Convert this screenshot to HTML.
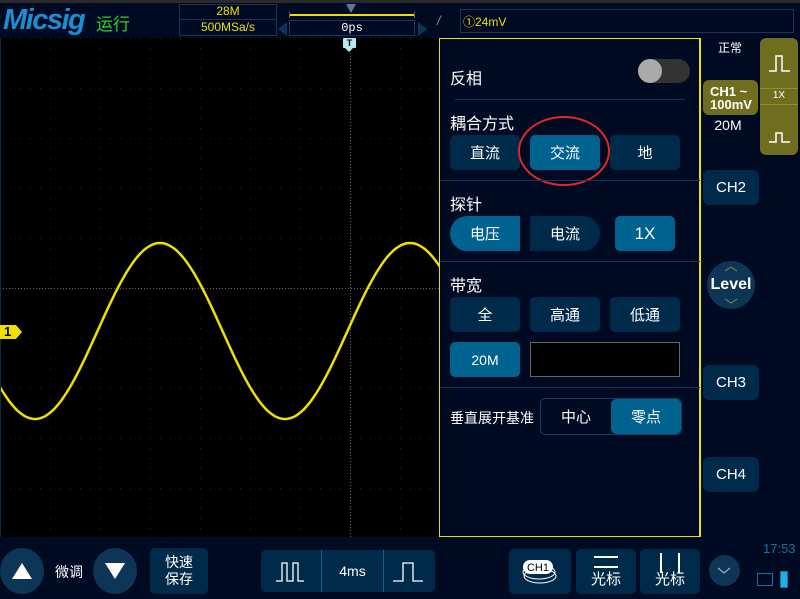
<!DOCTYPE html>
<html><head><meta charset="utf-8"><style>
*{margin:0;padding:0;box-sizing:border-box}
body{width:800px;height:599px;background:#000a22;position:relative;overflow:hidden;font-family:"Liberation Sans","Noto Sans CJK SC",sans-serif;color:#fff}
.a{position:absolute}
.btn{position:absolute;background:#002a4a;border-radius:5px;color:#fff;display:flex;align-items:center;justify-content:center;font-size:15px}
.sel{background:#00628e}
.hl{position:absolute;height:1px;background:#1e2f55;left:446px;width:250px}
.lbl{position:absolute;font-size:16px;color:#fff}
</style></head><body>
<div class="a" style="left:0;top:0;width:800px;height:3px;background:#2a2a2a"></div>
<div class="a" style="left:3px;top:4px;font-size:29px;font-weight:bold;font-style:italic;color:#1a8fd0;letter-spacing:-1.5px">Micsig</div>
<div class="a" style="left:96px;top:10px;font-size:17px;color:#2fd02f">运行</div>
<div class="a" style="left:179px;top:4px;width:98px;height:32px;border:1px solid #1d3358"></div>
<div class="a" style="left:179px;top:19px;width:98px;height:1px;background:#1d3358"></div>
<div class="a" style="left:179px;top:4px;width:98px;text-align:center;font-size:12px;color:#f0e000">28M</div>
<div class="a" style="left:179px;top:20px;width:98px;text-align:center;font-size:12px;color:#f0e000">500MSa/s</div>
<div class="a" style="left:289px;top:12px;width:126px;height:6px;border:1px solid #666;border-top:none;border-bottom:none"></div>
<div class="a" style="left:290px;top:14px;width:124px;height:2px;background:#f0e000"></div>
<div class="a" style="left:346px;top:4px;width:0;height:0;border-left:5px solid transparent;border-right:5px solid transparent;border-top:9px solid #5a7a9a"></div>
<div class="a" style="left:278px;top:22px;border-top:7px solid transparent;border-bottom:7px solid transparent;border-right:9px solid #0d3555"></div>
<div class="a" style="left:418px;top:22px;border-top:7px solid transparent;border-bottom:7px solid transparent;border-left:9px solid #0d3555"></div>
<div class="a" style="left:289px;top:20px;width:126px;height:16px;border:1px solid #1d3358;text-align:center;font-size:12px;line-height:15px;font-family:'Liberation Mono',monospace">0ps</div>
<div class="a" style="left:437px;top:13px;font-size:13px;color:#888;font-style:italic">/</div>
<div class="a" style="left:460px;top:9px;width:334px;height:24px;border:1px solid #1d3358;font-size:12px;color:#f0e000;padding:3px 2px">①24mV</div>

<svg class="a" style="left:0;top:38px" width="700" height="499" id="g">
<rect width="700" height="499" fill="#000"/>
</svg>
<div class="a" style="left:0;top:38px;width:1px;height:499px;background:#0c2a48"></div>
<div class="a" style="left:343px;top:38px;width:13px;height:10px;background:#b8e8f0;border-radius:1px;color:#000;font-size:9px;text-align:center;line-height:10px;font-weight:bold">T</div>
<div class="a" style="left:345px;top:48px;border-left:4px solid transparent;border-right:4px solid transparent;border-top:4px solid #b8e8f0"></div>
<div class="a" style="left:0;top:325px;width:16px;height:14px;background:#f0e000;color:#000;font-weight:bold;font-size:13px;line-height:14px;padding-left:4px">1</div>
<div class="a" style="left:16px;top:325px;border-top:7px solid transparent;border-bottom:7px solid transparent;border-left:6px solid #f0e000"></div>

<div class="a" style="left:439px;top:38px;width:262px;height:499px;background:#000a22;border:1px solid #f0e000;border-right:2px solid #f0e000"></div>
<div class="lbl" style="left:450px;top:65px">反相</div>
<div class="a" style="left:638px;top:59px;width:52px;height:24px;border-radius:12px;background:#333"></div>
<div class="a" style="left:638px;top:59px;width:24px;height:24px;border-radius:12px;background:#aaa"></div>
<div class="hl" style="top:99px;left:455px;width:230px"></div>
<div class="lbl" style="left:450px;top:110px">耦合方式</div>
<div class="btn" style="left:450px;top:135px;width:70px;height:35px">直流</div>
<div class="btn sel" style="left:530px;top:135px;width:70px;height:35px">交流</div>
<div class="btn" style="left:610px;top:135px;width:70px;height:35px">地</div>
<div class="a" style="left:518px;top:116px;width:92px;height:70px;border:2px solid #e02828;border-radius:50%"></div>
<div class="hl" style="top:180px;left:440px;width:260px"></div>
<div class="lbl" style="left:450px;top:191px">探针</div>
<div class="btn sel" style="left:450px;top:216px;width:70px;height:35px;border-radius:17px 0 0 17px">电压</div>
<div class="btn" style="left:530px;top:216px;width:70px;height:35px;border-radius:0 17px 17px 0">电流</div>
<div class="btn sel" style="left:615px;top:216px;width:60px;height:35px;font-size:17px">1X</div>
<div class="hl" style="top:261px;left:440px;width:260px"></div>
<div class="lbl" style="left:450px;top:272px">带宽</div>
<div class="btn" style="left:450px;top:297px;width:70px;height:35px">全</div>
<div class="btn" style="left:530px;top:297px;width:70px;height:35px">高通</div>
<div class="btn" style="left:610px;top:297px;width:70px;height:35px">低通</div>
<div class="btn sel" style="left:450px;top:342px;width:70px;height:35px;font-size:14px">20M</div>
<div class="a" style="left:530px;top:342px;width:150px;height:35px;background:#000;border:1px solid #666"></div>
<div class="hl" style="top:387px;left:440px;width:260px"></div>
<div class="lbl" style="left:450px;top:408px;font-size:14px">垂直展开基准</div>
<div class="a" style="left:540px;top:398px;width:142px;height:37px;border:1px solid #1d3a5a;border-radius:5px"></div>
<div class="btn" style="left:541px;top:399px;width:70px;height:35px;background:none;font-size:15px">中心</div>
<div class="btn sel" style="left:611px;top:399px;width:70px;height:35px">零点</div>

<div class="a" style="left:718px;top:39px;font-size:12px">正常</div>
<div class="a" style="left:760px;top:38px;width:38px;height:117px;background:#6e6e1e;border-radius:6px"></div>
<div class="a" style="left:760px;top:88px;width:38px;height:1px;background:#8e8e3e"></div>
<div class="a" style="left:760px;top:104px;width:38px;height:1px;background:#8e8e3e"></div>
<div class="a" style="left:760px;top:90px;width:38px;text-align:center;font-size:10px">1X</div>
<svg class="a" style="left:760px;top:38px" width="38" height="117"><path d="M9 33h7v-15h6v15h8M9 104h7v-9h6v9h8" stroke="#fff" stroke-width="1.5" fill="none"/></svg>
<div class="a" style="left:703px;top:80px;width:55px;height:35px;background:#6e6e1e;border-radius:6px;font-size:13px;font-weight:bold;line-height:13px;padding:5px 0 0 7px">CH1 ~<br>100mV</div>
<div class="a" style="left:697px;top:117px;width:62px;text-align:center;font-size:14px">20M</div>
<div class="btn" style="left:703px;top:170px;width:56px;height:35px;border-radius:6px">CH2</div>
<div class="a" style="left:707px;top:261px;width:48px;height:48px;border-radius:50%;background:#0d3555;font-size:16px;font-weight:bold;text-align:center;line-height:48px">Level</div>
<svg class="a" style="left:707px;top:261px" width="48" height="48"><path d="M18 10l6-4 6 4M18 38l6 4 6-4" stroke="#8a8a3a" fill="none"/></svg>
<div class="btn" style="left:703px;top:365px;width:56px;height:35px;border-radius:6px">CH3</div>
<div class="btn" style="left:703px;top:457px;width:56px;height:35px;border-radius:6px">CH4</div>

<div class="a" style="left:0;top:548px;width:44px;height:46px;border-radius:50%;background:#0d3555"></div>
<svg class="a" style="left:11px;top:562px" width="22" height="18"><path d="M11 1L21 17H1z" fill="#fff"/></svg>
<div class="a" style="left:55px;top:562px;font-size:14px">微调</div>
<div class="a" style="left:93px;top:548px;width:44px;height:46px;border-radius:50%;background:#0d3555"></div>
<svg class="a" style="left:104px;top:562px" width="22" height="18"><path d="M1 1H21L11 17z" fill="#fff"/></svg>
<div class="btn" style="left:150px;top:548px;width:58px;height:46px;font-size:14px;line-height:17px;text-align:center">快速<br>保存</div>
<div class="btn" style="left:261px;top:550px;width:174px;height:42px"></div>
<div class="a" style="left:321px;top:550px;width:1px;height:42px;background:#0d6090"></div>
<div class="a" style="left:383px;top:550px;width:1px;height:42px;background:#0d6090"></div>
<div class="a" style="left:322px;top:563px;width:61px;text-align:center;font-size:14px">4ms</div>
<svg class="a" style="left:261px;top:550px" width="174" height="42"><path d="M15 31h6v-18h5v18h6v-18h5v18h6M132 31h10v-18h10v18h10" stroke="#fff" stroke-width="1.3" fill="none"/></svg>
<div class="btn" style="left:509px;top:549px;width:62px;height:45px"></div>
<svg class="a" style="left:509px;top:549px" width="62" height="45"><ellipse cx="31" cy="27" rx="16" ry="7" fill="none" stroke="#fff" stroke-width="1"/><ellipse cx="30" cy="23" rx="16" ry="7" fill="none" stroke="#fff" stroke-width="1"/><rect x="14" y="11" width="30" height="14" rx="7" fill="#fff"/><text x="29" y="22" font-size="11" text-anchor="middle" fill="#000" font-family="Liberation Sans">CH1</text></svg>
<div class="btn" style="left:576px;top:549px;width:60px;height:45px;align-items:flex-end;padding-bottom:5px">光标</div>
<div class="a" style="left:594px;top:556px;width:24px;height:2px;background:#fff"></div>
<div class="a" style="left:594px;top:566px;width:24px;height:2px;background:#fff"></div>
<div class="btn" style="left:640px;top:549px;width:60px;height:45px;align-items:flex-end;padding-bottom:5px">光标</div>
<div class="a" style="left:660px;top:553px;width:2px;height:20px;background:#fff"></div>
<div class="a" style="left:678px;top:553px;width:2px;height:20px;background:#fff"></div>
<div class="a" style="left:709px;top:555px;width:31px;height:31px;border-radius:50%;background:#0d3555"></div>
<svg class="a" style="left:709px;top:555px" width="31" height="31"><path d="M9 13l6 5 6-5" stroke="#aac" fill="none" stroke-width="1.2"/></svg>
<div class="a" style="left:763px;top:541px;font-size:13px;color:#1a6fa0">17:53</div>
<div class="a" style="left:757px;top:573px;width:16px;height:13px;border:1px solid #1a6fa0"></div>
<div class="a" style="left:780px;top:571px;width:8px;height:17px;background:#1ab0e0;border:1px solid #1a6fa0"></div>
<script>
var g=document.getElementById('g'),s='';
for(var x=0;x<=700;x+=50)for(var y=0;y<=500;y+=50)s+='<rect x="'+x+'" y="'+y+'" width="1" height="1" fill="#555"/>';
for(var x=0;x<=700;x+=50)for(var y=0;y<=500;y+=10)s+='<rect x="'+x+'" y="'+y+'" width="1" height="1" fill="#2a2a2a"/>';
for(var y=0;y<=499;y+=50)for(var x=0;x<=700;x+=10)s+='<rect x="'+x+'" y="'+y+'" width="1" height="1" fill="#2a2a2a"/>';
for(var x=0;x<700;x+=3)s+='<rect x="'+x+'" y="250" width="1" height="1" fill="#666"/>';
for(var y=0;y<499;y+=3)s+='<rect x="350" y="'+y+'" width="1" height="1" fill="#666"/>';
var p='M';for(var x=0;x<=440;x+=2){p+=x+' '+(293-88*Math.sin(2*Math.PI*(x-97.5)/250)).toFixed(1)+' L';}
p=p.slice(0,-2);
s+='<path d="'+p+'" stroke="#f0e000" stroke-width="2.5" fill="none"/>';
g.innerHTML+=s;
</script>
</body></html>
